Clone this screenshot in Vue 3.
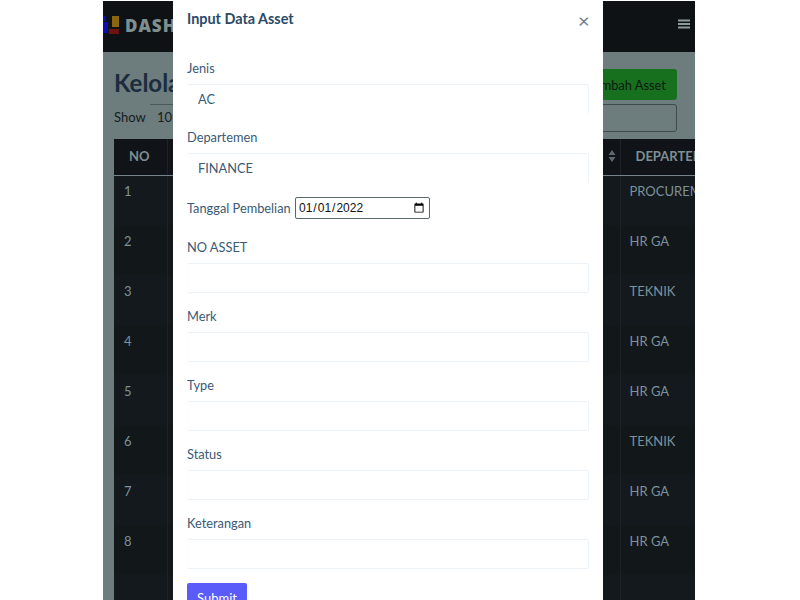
<script setup>
const rows = [
  { no: 1, dept: 'PROCUREMENT' },
  { no: 2, dept: 'HR GA' },
  { no: 3, dept: 'TEKNIK' },
  { no: 4, dept: 'HR GA' },
  { no: 5, dept: 'HR GA' },
  { no: 6, dept: 'TEKNIK' },
  { no: 7, dept: 'HR GA' },
  { no: 8, dept: 'HR GA' },
]
const textFields = ['Merk', 'Type', 'Status', 'Keterangan']
</script>

<template>
  <div class="page">
    <div class="frame">
      <header class="nav">
        <div class="brand">
          <svg class="logo" width="17" height="19" viewBox="0 0 17 19">
            <rect x="0" y="0" width="3" height="5" fill="#0c0cb0" />
            <rect x="0" y="6" width="5" height="11" fill="#0c0cb0" />
            <rect x="9" y="0" width="7" height="11" fill="#8a6610" />
            <rect x="6" y="13" width="10" height="5" fill="#6e1212" />
          </svg>
          <span class="brand-text">DASHBOARD</span>
        </div>
        <svg class="burger" width="12" height="10" viewBox="0 0 12 10">
          <path d="M0 1.5h12M0 5h12M0 8.500h12" stroke="#8b9a9c" stroke-width="1.800" />
        </svg>
      </header>

      <main class="content">
        <div class="top">
          <h1>Kelola Data Asset</h1>
          <button class="add" type="button">Tambah Asset</button>
        </div>
        <div class="filter">
          <span class="show">Show</span>
          <span class="len">10</span>
          <span class="search"></span>
        </div>
        <table class="grid">
          <colgroup>
            <col class="c-no" />
            <col class="c-mid" />
            <col class="c-dept" />
          </colgroup>
          <thead>
            <tr>
              <th class="th-no">NO</th>
              <th class="th-mid">
                <svg class="sort" width="8" height="12" viewBox="0 0 8 12">
                  <path d="M4 0l3.500 5h-7zM4 12l3.500-5h-7z" fill="#5c6a70" />
                </svg>
              </th>
              <th class="th-dept">DEPARTEMEN</th>
            </tr>
          </thead>
          <tbody>
            <tr v-for="r in rows" :key="r.no" :class="{ odd: r.no % 2 === 1 }">
              <td class="td-no">{{ r.no }}</td>
              <td></td>
              <td>{{ r.dept }}</td>
            </tr>
            <tr class="odd">
              <td></td>
              <td></td>
              <td></td>
            </tr>
          </tbody>
        </table>
      </main>

      <section class="modal">
        <div class="modal-head">
          <h2>Input Data Asset</h2>
          <span class="close">×</span>
        </div>
        <form class="form" @submit.prevent>
          <label class="lab">Jenis</label>
          <select class="ctl sel"><option>AC</option></select>
          <label class="lab">Departemen</label>
          <select class="ctl sel"><option>FINANCE</option></select>
          <div class="date-row">
            <label class="lab inline">Tanggal Pembelian</label>
            <input class="date" type="date" value="2022-01-01" />
          </div>
          <label class="lab">NO ASSET</label>
          <input class="ctl" type="text" />
          <template v-for="f in textFields" :key="f">
            <label class="lab">{{ f }}</label>
            <input class="ctl" type="text" />
          </template>
          <button class="submit" type="submit">Submit</button>
        </form>
      </section>
    </div>
  </div>
</template>

<style scoped>
.page {
  width: 800px;
  height: 600px;
  overflow: hidden;
  background: #fff;
  display: flex;
  justify-content: center;
  padding-top: 1px;
  box-sizing: border-box;
  font-family: Lato, "Open Sans", sans-serif;
}
.frame {
  position: relative;
  width: 592px;
  margin-left: -2px;
  height: 600px;
  overflow: hidden;
  background: #6d7c7c;
}
.nav {
  height: 51px;
  background: #0e1215;
  display: flex;
  align-items: center;
  justify-content: space-between;
  padding: 0 5px 0 0;
  box-sizing: border-box;
}
.brand {
  display: flex;
  align-items: center;
  gap: 5px;
  margin-top: -3px;
}
.brand-text {
  font-family: "Open Sans", sans-serif;
  font-weight: 800;
  font-size: 17px;
  letter-spacing: 1px;
  color: #7f8e8e;
}
.burger {
  margin-top: -6px;
}
.content {
  padding: 17px 18px 0 11px;
}
.top {
  display: flex;
  justify-content: space-between;
  align-items: flex-start;
  height: 35px;
}
h1 {
  margin: 0;
  font-size: 24px;
  line-height: 28px;
  font-weight: 700;
  color: #1c2c3e;
}
.add {
  height: 31px;
  width: 100px;
  border: 0;
  border-radius: 3px;
  background: #17701e;
  color: #0d1a10;
  font: 400 12.800px Lato, sans-serif;
}
.filter {
  display: flex;
  align-items: center;
  height: 28px;
  position: relative;
  font-size: 13px;
  color: #141c22;
}
.show {
  width: 36px;
  margin-top: -2px;
}
.len {
  border-top: 1px solid #4c5a5e;
  height: 28px;
  line-height: 24px;
  padding-left: 7px;
  width: 60px;
  box-sizing: border-box;
}
.search {
  margin-left: auto;
  width: 220px;
  height: 28px;
  box-sizing: border-box;
  border: 1px solid #3e4a4c;
  border-radius: 3px;
}
.grid {
  margin-top: 7px;
  width: 700px;
  table-layout: fixed;
  border-collapse: collapse;
  background: #12171a;
  font-size: 13px;
  color: #7b929c;
}
.c-no { width: 53px; }
.c-mid { width: 453px; }
.c-dept { width: 194px; }
th {
  height: 36px;
  box-sizing: border-box;
  background: #101418;
  color: #7f8e92;
  font-weight: 700;
  text-align: left;
  border-bottom: 1px solid #74848a;
  border-right: 1px solid #1c2227;
  padding: 0 0 1px 15px;
}
th.th-mid {
  text-align: right;
  padding-right: 4px;
  font-size: 0;
}
td {
  height: 50px;
  box-sizing: border-box;
  vertical-align: top;
  padding: 8px 0 0 9px;
  border-right: 1px solid #1c2227;
  line-height: 17px;
}
tbody tr:first-child td {
  padding-top: 7px;
}
.td-no {
  padding-left: 10px;
}
tr.odd td {
  background: #14191d;
}
.modal {
  position: absolute;
  left: 70px;
  top: -1px;
  width: 430px;
  height: 601px;
  box-sizing: border-box;
  background: #fff;
  padding: 0 14px;
  color: #3a5a75;
}
.modal-head {
  display: flex;
  justify-content: space-between;
  align-items: center;
  height: 58px;
  padding: 9px 0 29px;
  box-sizing: border-box;
}
h2 {
  margin: 0;
  font-size: 14.400px;
  font-weight: 700;
  line-height: 20px;
  color: #2a4a68;
}
.close {
  font-size: 20px;
  font-weight: 400;
  color: #6c7f88;
  margin: 2px 0 0;
  width: 11px;
}
.form {
  display: flex;
  flex-direction: column;
  align-items: flex-start;
}
.lab {
  height: 20px;
  line-height: 20px;
  margin-bottom: 6px;
  font-size: 12.800px;
  color: #3a5a75;
}
.lab.inline {
  margin: 0 2px 0 0;
  width: 106px;
  white-space: nowrap;
}
.ctl {
  display: block;
  width: 402px;
  height: 30px;
  box-sizing: border-box;
  margin: 0 0 13px;
  padding: 0 10px;
  border: 1px solid #edf3f6;
  border-left-color: #fafcfd;
  border-radius: 2px;
  background: #fff;
  font: 400 12.800px Lato, sans-serif;
  color: #3a5a75;
  outline: none;
}
.sel {
  appearance: none;
  border-bottom-color: #fff;
  border-left-color: #fff;
}
.date-row {
  display: flex;
  align-items: center;
  height: 22px;
  margin: 1px 0 18px;
}
.date {
  width: 135px;
  height: 22px;
  box-sizing: border-box;
  border: 1px solid #5a686c;
  border-radius: 2px;
  padding: 1px 2px;
  background: #fff;
  color: #111;
  font: 12px "Liberation Sans", sans-serif;
}
.submit {
  margin-top: 1px;
  width: 60px;
  height: 30px;
  border: 0;
  border-radius: 2px;
  background: #5b5bfa;
  color: #fff;
  font: 400 13px Lato, sans-serif;
}
</style>
